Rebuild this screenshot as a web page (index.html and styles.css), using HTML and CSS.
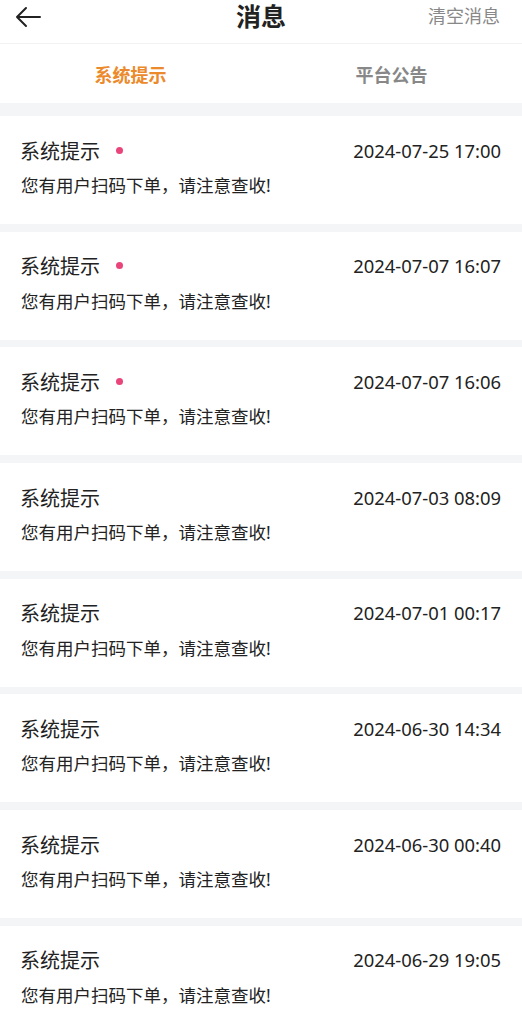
FILE: index.html
```html
<!DOCTYPE html>
<html lang="zh">
<head>
<meta charset="utf-8">
<link rel="stylesheet" href="styles.css">
</head>
<body>
<div class="page">
  <header class="topbar">
    <svg class="back" width="28" height="22" viewBox="0 0 28 22"><path d="M26 11H3M12 2L3 11l9 9" fill="none" stroke="#222" stroke-width="2" stroke-linecap="round" stroke-linejoin="round"/></svg>
    <h1 class="title">消息</h1>
    <span class="clear">清空消息</span>
  </header>
  <nav class="tabs">
    <div class="tab active">系统提示</div>
    <div class="tab">平台公告</div>
  </nav>
  <div class="list">
    <div class="card"><div class="row"><span class="name">系统提示</span><span class="dot"></span><span class="time">2024-07-25 17:00</span></div><div class="msg">您有用户扫码下单，请注意查收!</div></div>
    <div class="card"><div class="row"><span class="name">系统提示</span><span class="dot"></span><span class="time">2024-07-07 16:07</span></div><div class="msg">您有用户扫码下单，请注意查收!</div></div>
    <div class="card"><div class="row"><span class="name">系统提示</span><span class="dot"></span><span class="time">2024-07-07 16:06</span></div><div class="msg">您有用户扫码下单，请注意查收!</div></div>
    <div class="card"><div class="row"><span class="name">系统提示</span><span class="time">2024-07-03 08:09</span></div><div class="msg">您有用户扫码下单，请注意查收!</div></div>
    <div class="card"><div class="row"><span class="name">系统提示</span><span class="time">2024-07-01 00:17</span></div><div class="msg">您有用户扫码下单，请注意查收!</div></div>
    <div class="card"><div class="row"><span class="name">系统提示</span><span class="time">2024-06-30 14:34</span></div><div class="msg">您有用户扫码下单，请注意查收!</div></div>
    <div class="card"><div class="row"><span class="name">系统提示</span><span class="time">2024-06-30 00:40</span></div><div class="msg">您有用户扫码下单，请注意查收!</div></div>
    <div class="card"><div class="row"><span class="name">系统提示</span><span class="time">2024-06-29 19:05</span></div><div class="msg">您有用户扫码下单，请注意查收!</div></div>
  </div>
</div>
</body>
</html>
```
FILE: styles.css
```css
* { box-sizing: border-box; }
html, body { margin: 0; padding: 0; }
body {
  font-family: "Noto Sans", "Noto Sans CJK SC", sans-serif;
  background: #f4f5f7;
  color: #222;
  width: 522px;
  height: 1024px;
  overflow: hidden;
}
.topbar {
  position: relative;
  height: 44px;
  background: #fff;
  display: flex;
  align-items: center;
  justify-content: space-between;
  padding: 0 22px 0 14px;
  border-bottom: 1px solid #f2f2f2;
}
.back { display: block; margin-top: -10px; }
.title {
  position: absolute;
  left: 0; right: 0;
  top: -2px;
  margin: 0;
  text-align: center;
  font-size: 25px;
  font-weight: 700;
  line-height: 36px;
  color: #222;
  pointer-events: none;
}
.clear {
  font-size: 18px;
  color: #888;
  margin-top: -14px;
}
.tabs {
  height: 59px;
  background: #fff;
  display: flex;
  align-items: center;
  margin-bottom: 13px;
}
.tab {
  flex: 1;
  text-align: center;
  font-size: 18px;
  font-weight: 700;
  color: #888;
  margin-top: 1px;
}
.tab.active { color: #ec8a2b; }
.list { display: flex; flex-direction: column; gap: 7.7px; }
.card {
  background: #fff;
  height: 108px;
  padding: 20px 21px 0 21px;
}
.row { display: flex; align-items: center; height: 28px; }
.name { font-size: 20px; color: #222; margin-left: -1px; }
.dot {
  width: 7px; height: 7px;
  border-radius: 50%;
  background: #e9457a;
  margin-left: 16px;
  margin-top: 0;
}
.time { margin-left: auto; font-size: 18.4px; color: #222; }
.msg { font-size: 17.5px; margin-top: 8px; color: #222; }
```
